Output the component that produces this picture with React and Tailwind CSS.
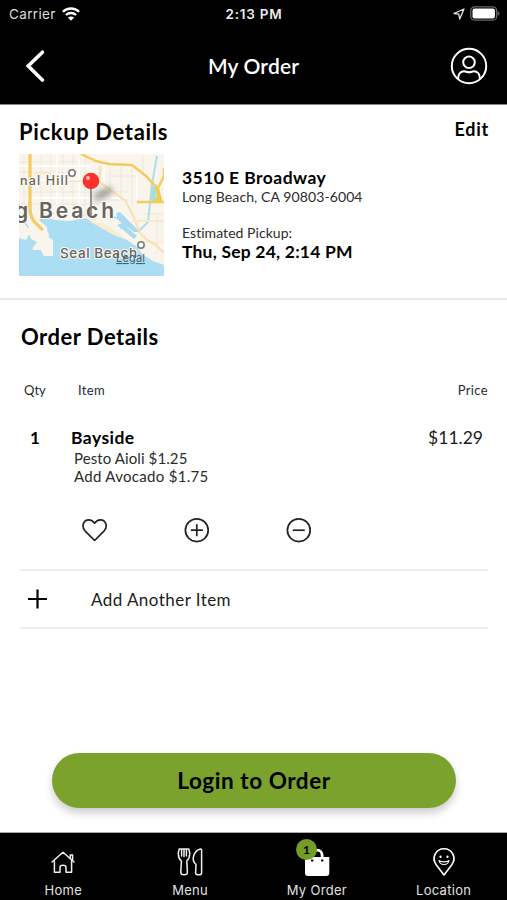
function MapPreview() {
  return (
    <svg width="145" height="122" viewBox="0 0 145 122" className="block shrink-0">
      <defs>
        <filter id="pinShadow" x="-50%" y="-100%" width="200%" height="300%">
          <feGaussianBlur stdDeviation="3" />
        </filter>
      </defs>
      <rect width="145" height="122" fill="#f9f5ec" />
      <g stroke="#ebe6dc" strokeWidth="0.8" fill="none">
        <path d="M5 0V60M22 0V62M32 0V62M44 0V62M54 0V62M66 0V60M91 12V36M102 12V44M113 14V52M124 0V20M138 60V100" />
        <path d="M0 8H75M0 18H62M0 38H110M0 50H80M90 46H112M88 22H120M124 60H145M126 88H145" />
      </g>
      <g stroke="#fff" strokeWidth="1.4" fill="none">
        <path d="M0 12H70M14 26H60M12 44H108M38 0V62M60 4V60M85 10V30M118 20V46" />
      </g>
      <path d="M0 67L7 71L11 79L7 86L0 84V122H145V111L134 107L124 101L117 92L108 86L97 80L82 72L66 64L50 67L36 66L23 62L20 66L28 73L29 83L34 86V102L25 102L22 96L14 96L18 88L14 82L12 76L6 67Z" fill="#abdef3" />
      <path d="M8 74L14 72L27 76L30 80L29 91L34 94L34 102L25 102L22 95L13 95L18 88L12 85Z" fill="#f9f5ec" />
      <path d="M70 67L84 69L98 78L108 86L97 82L84 75Z" fill="#f9eccf" />
      <path d="M97 59L101 58L115 72L121 78L115 78L99 66ZM98 71L103 69L118 82L115 85Z" fill="#a6dbf2" />
      <path d="M92 62L106 67M101 74L112 70" stroke="#a6dbf2" strokeWidth="1.8" />
      <path d="M138 2L133 30L131 49L129 68L119 78" stroke="#a9dff0" strokeWidth="2" fill="none" />
      <path d="M132 34L138 30L137 48L131 49Z" fill="#a9dfd5" />
      <path d="M81 12V28L94 38L106 46L113 59L121 79L128 86L137 91L145 99" stroke="#f7e2b8" strokeWidth="2.2" fill="none" />
      <path d="M50 27H64M15 19H33M62 60L77 66M113 67H145" stroke="#f9e9c6" strokeWidth="2" fill="none" />
      <path d="M11 0V54C11 65 16 69 24 76" stroke="#f6ca5d" strokeWidth="3.2" fill="none" />
      <path d="M62 0L77 7L90 10L113 11L127 22L138 34M145 14V22L138 36M118 48H145" stroke="#f5cb5c" strokeWidth="2.4" fill="none" />
      <path d="M136 32L140 34L144 49H135L138 42Z" fill="#f1cd4e" />
      <ellipse cx="84" cy="40" rx="11" ry="4.5" transform="rotate(-28 84 40)" fill="#000" opacity="0.34" filter="url(#pinShadow)" />
      <g fontFamily="Inter, sans-serif" fill="#656461" stroke="#fcfaf4" strokeWidth="2" paintOrder="stroke" strokeLinejoin="round">
        <text x="1" y="31" fontSize="12.5" fontWeight="500" textLength="48">nal Hill</text>
        <text x="-4" y="64" fontSize="21" fontWeight="600" textLength="99">g Beach</text>
        <text x="41" y="104" fontSize="13.5" fontWeight="500" textLength="77">Seal Beach</text>
      </g>
      <text x="97" y="108" fontSize="11" fontFamily="Inter, sans-serif" fill="#47606b" textDecoration="underline" textLength="29">Legal</text>
      <g fill="#fff" stroke="#777" strokeWidth="1.5">
        <circle cx="53" cy="19" r="3.2" />
        <circle cx="122" cy="91" r="3.2" />
      </g>
      <path d="M72 34V61" stroke="#7d7d7d" strokeWidth="2" opacity="0.8" />
      <circle cx="72" cy="27" r="8.3" fill="#fc302c" />
      <circle cx="69" cy="24" r="2" fill="#ffb5b0" />
    </svg>
  );
}

function StatusBar() {
  return (
    <div className="flex h-7 items-center pl-[9px] pr-[7px] font-['Inter',sans-serif]">
      <div className="flex w-[150px] items-center gap-[6px]">
        <span className="text-[13.5px] leading-7 tracking-[0.35px] text-[#dedede]">Carrier</span>
        <svg width="18" height="14" viewBox="0 0 18 14" fill="none" stroke="#fff" strokeWidth="2.3">
          <path d="M0.9 4.8C5.4 0.4 12.6 0.4 17.1 4.8M3.9 8C6.7 5.3 11.3 5.3 14.1 8" />
          <path d="M9 13.7L5.9 10.6C7.6 9 10.4 9 12.1 10.6Z" fill="#fff" stroke="none" />
        </svg>
      </div>
      <div className="flex-1 pr-[1px] text-center text-[13.5px] font-semibold leading-7 tracking-[0.75px] text-[#ececec]">2:13 PM</div>
      <div className="flex w-[150px] items-center justify-end gap-[5px]">
        <svg width="12" height="12" viewBox="0 0 12 12" fill="none" stroke="#e5e5e5" strokeWidth="1.3" strokeLinejoin="round">
          <path d="M11 1L1 5.5L5.8 6.2L6.7 11Z" />
        </svg>
        <svg width="30" height="16" viewBox="0 0 30 16">
          <rect x="0.7" y="0.8" width="26" height="13.4" rx="4" fill="none" stroke="#696969" strokeWidth="1.3" />
          <rect x="2.5" y="2.6" width="22.4" height="9.8" rx="2" fill="#fff" />
          <path d="M27.7 5.3C30.2 6.3 30.2 8.8 27.7 9.8Z" fill="#696969" />
        </svg>
      </div>
    </div>
  );
}

function Header() {
  return (
    <header className="h-[105px] border-b border-[#8a8585] bg-black text-white">
      <StatusBar />
      <div className="flex h-[75px] items-center justify-between px-[19px]">
        <svg width="38" height="34" viewBox="0 0 38 34" fill="none" stroke="#fff" strokeWidth="3.6" strokeLinecap="round" strokeLinejoin="miter">
          <path d="M23.4 3.2L9.2 17L23.4 31" />
        </svg>
        <h1 className="pt-px text-[21px] font-semibold leading-[30px] tracking-[0.15px]">My Order</h1>
        <svg width="38" height="38" viewBox="0 0 38 38" fill="none" stroke="#fff" strokeWidth="2">
          <circle cx="19" cy="19" r="17.2" />
          <circle cx="19" cy="15.3" r="5.8" />
          <path d="M8.2 31.8C7.8 26.8 11 24.3 14 24.3C16 24.3 16.5 25.2 19 25.2C21.5 25.2 22 24.3 24 24.3C27 24.3 30.2 26.8 29.8 31.8" />
        </svg>
      </div>
    </header>
  );
}

function Pickup() {
  return (
    <section className="h-[195px] border-b-2 border-[#e9e9e9] pl-[19px] pr-[18px]">
      <div className="flex h-[49px] justify-between pt-3">
        <h2 className="text-[22px] font-bold leading-[30px] tracking-[0.65px]">Pickup Details</h2>
        <span className="text-[18px] font-bold leading-[25px] tracking-[0.75px]">Edit</span>
      </div>
      <div className="flex gap-[18px]">
        <MapPreview />
        <div className="pt-[13px]">
          <p className="text-[17.5px] font-bold leading-[22px] tracking-[0.45px]">3510 E Broadway</p>
          <p className="text-[14px] leading-4 tracking-[0.1px] text-[#2b2b2b]">Long Beach, CA 90803-6004</p>
          <p className="mt-5 text-[14px] leading-4 tracking-[0.05px] text-[#2b2b2b]">Estimated Pickup:</p>
          <p className="text-[17.5px] font-bold leading-[22px] tracking-[0.2px]">Thu, Sep 24, 2:14 PM</p>
        </div>
      </div>
    </section>
  );
}

function OrderActions() {
  return (
    <div className="flex h-[26px] gap-[76px] pl-[62px]">
      <svg width="26" height="26" viewBox="0 0 26 26" fill="none" stroke="#222" strokeWidth="1.7" strokeLinejoin="round">
        <path d="M12.6 23.5L3 13.8C-1 9.3 1.6 2.8 6.8 2.8C9.4 2.8 11.2 4 12.6 6.2C14 4 15.8 2.8 18.4 2.8C23.6 2.8 26.2 9.3 22.2 13.8Z" />
      </svg>
      <svg width="26" height="26" viewBox="0 0 26 26" fill="none" stroke="#222" strokeWidth="1.7">
        <circle cx="12.8" cy="13.2" r="11.4" />
        <path d="M6.8 13.2H18.8M12.8 7.2V19.2" />
      </svg>
      <svg width="26" height="26" viewBox="0 0 26 26" fill="none" stroke="#222" strokeWidth="1.7">
        <circle cx="12.8" cy="13.2" r="11.4" />
        <path d="M6.8 13.2H18.8" />
      </svg>
    </div>
  );
}

function Order() {
  return (
    <section className="flex-1 pl-5 pr-[19px] pt-[22px]">
      <h2 className="pl-px text-[22px] font-bold leading-[30px] tracking-[0.5px]">Order Details</h2>
      <div className="mt-7 flex h-5 text-[13px] leading-5 text-[#2b2b2b]">
        <span className="w-[58px] pl-1">Qty</span>
        <span className="flex-1 tracking-[0.35px]">Item</span>
        <span className="tracking-[0.35px]">Price</span>
      </div>
      <div className="mt-[26px] flex h-[62px]">
        <span className="w-[51px] pl-[10px] text-[17px] font-bold leading-6">1</span>
        <div className="flex-1">
          <p className="text-[17.5px] font-bold leading-[23px] tracking-[0.45px]">Bayside</p>
          <p className="pl-[3px] text-[15px] leading-[18px] tracking-[0.1px] text-[#2b2b2b]">Pesto Aioli $1.25</p>
          <p className="pl-[3px] text-[15px] leading-[19px] tracking-[0.3px] text-[#2b2b2b]">Add Avocado $1.75</p>
        </div>
        <span className="pr-[5px] text-[17.5px] leading-6 text-[#1c1c1c]">$11.29</span>
      </div>
      <div className="mt-[29px]">
        <OrderActions />
      </div>
      <div className="mt-[26px] flex h-[60px] items-center border-y-2 border-[#ededed] pl-2">
        <svg width="20" height="20" viewBox="0 0 20 20" stroke="#000" strokeWidth="2.2">
          <path d="M0 10H19M9.5 0.5V19.5" />
        </svg>
        <span className="pl-[43px] pt-px text-[17px] leading-6 tracking-[0.45px] text-[#1c1c1c]">Add Another Item</span>
      </div>
      <div className="mt-[124px] px-8">
        <button className="block h-[55px] w-full rounded-full bg-[#7aa22d] text-[22.5px] font-bold tracking-[0.55px] shadow-[0_5px_9px_rgba(0,0,0,0.2)]">Login to Order</button>
      </div>
    </section>
  );
}

function HomeIcon() {
  return (
    <svg width="28" height="30" viewBox="0 0 28 30" fill="none" stroke="#f0f0f0" strokeWidth="1.5" strokeLinejoin="round" strokeLinecap="round">
      <path d="M3 15L14 5.2L25 15M21.3 11V8H23.6V13.4" />
      <path d="M5.4 13.5V25.2H11V20.4C11 17.6 17 17.6 17 20.4V25.2H22.6V13.5" />
    </svg>
  );
}

function MenuIcon() {
  return (
    <svg width="28" height="30" viewBox="0 0 28 30" fill="none" stroke="#f0f0f0" strokeWidth="1.5" strokeLinejoin="round" strokeLinecap="round">
      <path d="M3.2 2H5.6V9M5.6 2H8V9.5M8 2H10.4V9M10.4 2H12.8C14.2 6.5 14.6 10.6 10.8 14L11.4 25.4C11.4 28.4 4.8 28.4 4.8 25.4L5.4 14C1.8 11 1.8 6.5 3.2 2Z" />
      <path d="M25.6 3.2V26C25.6 28.4 19.6 28.4 19.6 26L20 17.3C14.4 13 18 3.8 24.4 2C25.2 1.8 25.6 2.4 25.6 3.2Z" />
    </svg>
  );
}

function BagIcon() {
  return (
    <div className="relative">
      <svg width="28" height="30" viewBox="0 0 28 30" fill="none">
        <path d="M9.5 13V9C9.5 1.2 19.2 1.2 19.2 9V13" stroke="#fff" strokeWidth="2.8" />
        <path d="M2 10H26.3V26Q26.3 29 23.3 29H5Q2 29 2 26Z" fill="#fff" />
        <path d="M9.2 12.5V14.5M19.2 12.5V14.5" stroke="#000" strokeWidth="2.2" />
      </svg>
      <span className="absolute -left-[7px] -top-2 flex size-[21px] items-center justify-center rounded-full bg-[#729d28] text-[12px] font-bold text-black">1</span>
    </div>
  );
}

function LocationIcon() {
  return (
    <svg width="28" height="30" viewBox="0 0 28 30" fill="none" stroke="#fff" strokeWidth="1.6" strokeLinejoin="round" strokeLinecap="round">
      <path d="M14 28L6.2 17.8C1 10.5 6 1.8 14 1.8C22 1.8 27 10.5 21.8 17.8Z" />
      <path d="M9 13.5C10 18.8 18 18.8 19 13.5C17 15.3 11 15.3 9 13.5Z" strokeWidth="1.1" />
      <path d="M10.5 9.6V9.9M17.5 9.6V9.9" strokeWidth="2.2" />
    </svg>
  );
}

const tabs = [
  { label: "Home", Icon: HomeIcon },
  { label: "Menu", Icon: MenuIcon },
  { label: "My Order", Icon: BagIcon },
  { label: "Location", Icon: LocationIcon },
];

function TabBar() {
  return (
    <nav className="grid h-[68px] grid-cols-4 border-t border-[#aaa] bg-black pt-[14px] text-[#e2e2e2]">
      {tabs.map(({ label, Icon }) => (
        <div key={label} className="flex flex-col items-center">
          <Icon />
          <span className="mt-[4px] font-['Inter',sans-serif] text-[13px] leading-[18px] tracking-[0.3px]">{label}</span>
        </div>
      ))}
    </nav>
  );
}

export default function App() {
  return (
    <div className="flex h-[900px] w-[507px] flex-col overflow-hidden bg-white font-['Lato',sans-serif] text-black">
      <Header />
      <Pickup />
      <Order />
      <TabBar />
    </div>
  );
}
